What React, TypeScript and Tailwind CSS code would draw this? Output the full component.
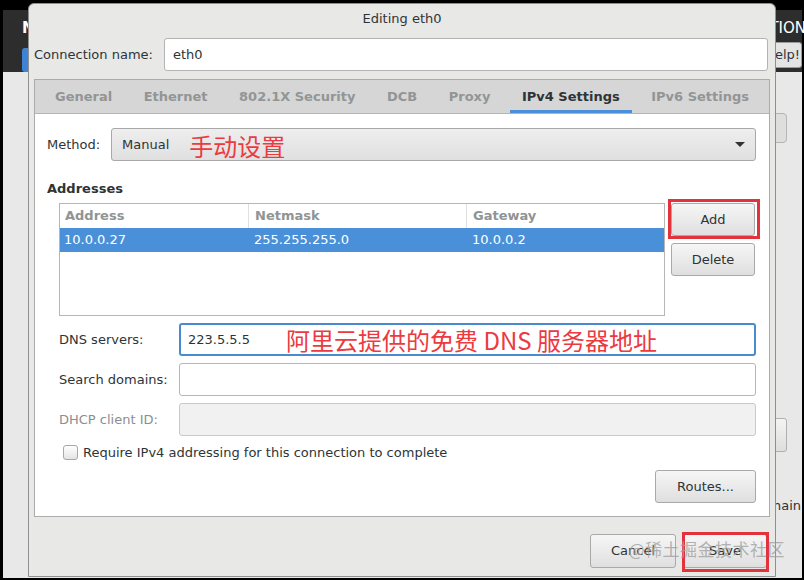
const tabs = ["General", "Ethernet", "802.1X Security", "DCB", "Proxy", "IPv4 Settings", "IPv6 Settings"];

function Button({ children, className = "" }: { children: React.ReactNode; className?: string }) {
  return (
    <div
      className={`flex items-center justify-center rounded-[3px] border border-[#a9a9a9] bg-gradient-to-b from-[#f6f6f6] to-[#dfdfdf] text-[13px] text-[#2e3436] ${className}`}
    >
      {children}
    </div>
  );
}

function FieldRow({ label, muted, children }: { label: string; muted?: boolean; children?: React.ReactNode }) {
  return (
    <div className="flex h-[33px] items-center">
      <span className={`w-[120px] text-[13px] ${muted ? "text-[#8b8e8f]" : "text-[#2e3436]"}`}>{label}</span>
      {children}
    </div>
  );
}

export default function App() {
  return (
    <div className="relative flex h-[580px] w-[804px] overflow-hidden bg-black pt-[10px] pr-[2px] pb-[2px] pl-[3px] font-['DejaVu_Sans',sans-serif]">
      {/* window behind the dialog */}
      <div className="flex flex-1 flex-col">
        <div className="flex h-[62px] justify-between bg-[#2d2d2d]">
          <div className="flex flex-col pt-[10px] pl-[19px]">
            <span className="text-[15px] font-bold leading-[16px] text-white">NETWORK &amp; HOST NAME</span>
            <div className="mt-[12px] h-[30px] w-[60px] rounded-[3px] bg-[#3f83d6]" />
          </div>
          <div className="flex flex-col items-end pt-[10px]">
            <span className="-mr-[4px] text-[15px] leading-[16px] text-white">CENTOS 7 INSTALLATION</span>
            <div className="mt-[6px] flex h-[26px] w-[60px] items-center justify-end rounded-[3px] border border-[#9a9a9a] bg-[#e4e4e4] pr-[1px] text-[13px] text-[#2e3436]">
              Help!
            </div>
          </div>
        </div>
        <div className="flex flex-1 flex-col items-end bg-[#e8e8e8] pr-[15px]">
          <div className="mt-[41px] h-[30px] w-[80px] rounded-[4px] border border-[#b5b5b5] bg-[#dedede]" />
          <div className="mt-[275px] h-[34px] w-[90px] rounded-[3px] border border-[#b0b0b0] bg-gradient-to-b from-[#f4f4f4] to-[#dedede]" />
          <span className="mt-[44px] -mr-[14px] text-[13px] text-[#2e3436]">localhost.localdomain</span>
        </div>
      </div>

      {/* dialog */}
      <div className="absolute top-[3px] left-[28px] flex h-[574px] w-[748px] flex-col rounded-t-[6px] border border-[#8f8f8f] bg-[#e8e8e7]">
        <div className="flex h-[30px] items-center justify-center text-[13px] text-[#2e3436]">Editing eth0</div>
        <div className="flex items-center pt-[4px] pr-[7px] pl-[5px]">
          <span className="w-[130px] text-[13px] text-[#2e3436]">Connection name:</span>
          <div className="flex h-[33px] flex-1 items-center rounded-[3px] border border-[#b3b3b3] bg-white px-[8px] text-[13px] text-[#2e3436]">
            eth0
          </div>
        </div>

        <div className="mx-[5px] mt-[8px] flex h-[438px] flex-col border border-[#ababab] bg-white">
          <div className="flex h-[34px] gap-[7.5px] border-b border-[#b5b5b5] bg-[#d6d6d6] pl-[8px]">
            {tabs.map((t) => (
              <div
                key={t}
                className={`flex items-center px-3 pt-[1px] text-[13px] font-bold ${
                  t === "IPv4 Settings"
                    ? "border-b-[3px] border-[#4a90d9] pt-[4px] text-[#2e3436]"
                    : "text-[#929595]"
                }`}
              >
                {t}
              </div>
            ))}
          </div>

          <div className="flex flex-1 flex-col pt-[14px] pr-[13px] pl-[12px]">
            <div className="flex h-[33px] items-center">
              <span className="w-[64px] text-[13px] text-[#2e3436]">Method:</span>
              <div className="flex h-[33px] flex-1 items-center rounded-[3px] border border-[#a8a8a8] bg-gradient-to-b from-[#eeeeee] to-[#e0e0e0] pr-[10px] pl-[10px]">
                <span className="text-[13px] text-[#2e3436]">Manual</span>
                <span className="mt-[3px] ml-[20px] font-['Noto_Sans_CJK_SC',sans-serif] text-[24px] leading-[28px] text-[#ec3a40]">
                  手动设置
                </span>
                <svg className="ml-auto" width="10" height="6" viewBox="0 0 10 6">
                  <polygon points="0,0 10,0 5,5" fill="#2e3436" />
                </svg>
              </div>
            </div>

            <span className="mt-[20px] text-[13px] leading-[16px] font-bold text-[#2e3436]">Addresses</span>

            <div className="mt-[6px] ml-[12px] flex">
              <div className="flex h-[113px] w-[606px] flex-col border border-[#b6b6b6] bg-white text-[13px]">
                <div className="flex h-[24px] font-bold text-[#919494]">
                  <span className="flex w-[189px] items-center border-r border-[#e0e0e0] pl-[5px]">Address</span>
                  <span className="flex w-[218px] items-center border-r border-[#e0e0e0] pl-[6px]">Netmask</span>
                  <span className="flex flex-1 items-center pl-[6px]">Gateway</span>
                </div>
                <div className="flex h-[24px] items-center bg-[#4a90d9] text-white">
                  <span className="w-[189px] pl-[4px]">10.0.0.27</span>
                  <span className="w-[218px] pl-[5px]">255.255.255.0</span>
                  <span className="flex-1 pl-[5px]">10.0.0.2</span>
                </div>
              </div>
              <div className="ml-[6px] flex flex-col gap-[7px]">
                <div className="relative">
                  <Button className="h-[33px] w-[84px]">Add</Button>
                  <div className="absolute -top-[4px] -right-[5px] -bottom-[3px] -left-[3px] border-[3px] border-[#e2323b]" />
                </div>
                <Button className="h-[33px] w-[84px]">Delete</Button>
              </div>
            </div>

            <div className="mt-[7px] ml-[12px] flex flex-col gap-[7px]">
              <FieldRow label="DNS servers:">
                <div className="flex h-[33px] flex-1 items-center rounded-[3px] border-2 border-[#4a8ad0] bg-white pl-[7px]">
                  <span className="text-[13px] text-[#2e3436]">223.5.5.5</span>
                  <span className="mt-[1px] ml-[36px] font-['Noto_Sans_CJK_SC',sans-serif] text-[24px] leading-[28px] text-[#ec3a40]">
                    阿里云提供的免费 DNS 服务器地址
                  </span>
                </div>
              </FieldRow>
              <FieldRow label="Search domains:">
                <div className="h-[33px] flex-1 rounded-[3px] border border-[#b6b6b6] bg-white" />
              </FieldRow>
              <FieldRow label="DHCP client ID:" muted>
                <div className="h-[33px] flex-1 rounded-[3px] border border-[#c9c9c9] bg-[#f1f1f1]" />
              </FieldRow>
            </div>

            <div className="mt-[9px] ml-[16px] flex h-[15px] items-center">
              <div className="h-[15px] w-[15px] rounded-[3px] border border-[#a8a8a8] bg-gradient-to-b from-white to-[#e4e4e4]" />
              <span className="ml-[5px] text-[13px] leading-[15px] text-[#2e3436]">
                Require IPv4 addressing for this connection to complete
              </span>
            </div>

            <Button className="mt-[10px] h-[33px] w-[101px] self-end">Routes...</Button>
          </div>
        </div>

        <div className="relative flex justify-end gap-[7px] pt-[17px] pr-[8px]">
          <Button className="h-[34px] w-[86px]">Cancel</Button>
          <div className="relative">
            <Button className="h-[34px] w-[84px]">Save</Button>
            <div className="absolute -top-[2px] -right-[2px] -bottom-[4px] -left-[1px] border-[3px] border-[#e2323b]" />
          </div>
          <span className="absolute top-[19px] right-[-10px] font-['Noto_Sans_CJK_SC',sans-serif] text-[17px] tracking-[0.5px] text-[#a0a0a0]/80">
            @稀土掘金技术社区
          </span>
        </div>
      </div>
    </div>
  );
}
